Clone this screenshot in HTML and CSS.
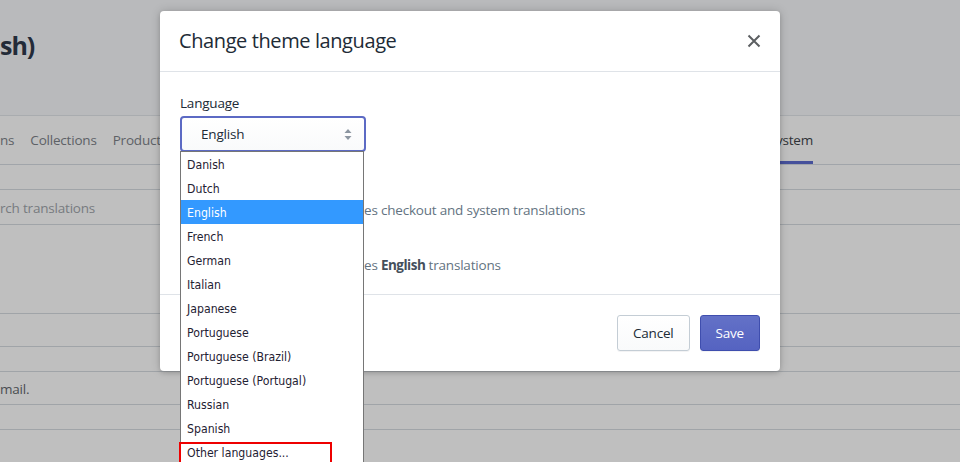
FILE: index.html
```html
<!DOCTYPE html>
<html lang="en">
<head>
<meta charset="utf-8">
<title>Change theme language</title>
<link rel="stylesheet" href="styles.css">
</head>
<body>
<div class="page">
  <header class="page-head"><h1 class="page-title">sh)</h1></header>
  <nav class="tabs">
    <span class="tab">ns</span>
    <span class="tab">Collections</span>
    <span class="tab">Products</span>
    <span class="tab-spacer"></span>
    <span class="tab active">System</span>
  </nav>
  <div class="row h24"></div>
  <div class="row search">rch translations</div>
  <div class="row h88"></div>
  <div class="row h32"></div>
  <div class="row h24"></div>
  <div class="row h32 note">mail.</div>
  <div class="row h24"></div>
</div>

<div class="modal">
  <div class="modal-head">
    <h2 class="modal-title">Change theme language</h2>
    <svg class="close" width="14" height="14" viewBox="0 0 14 14"><path d="M1.5 1.5l11 11M12.5 1.5l-11 11" stroke="#5c5f62" stroke-width="2" fill="none"/></svg>
  </div>
  <div class="modal-body">
    <div class="label">Language</div>
    <div class="select">
      <span class="select-value">English</span>
      <svg class="arrows" width="8" height="11" viewBox="0 0 8 11"><path d="M4 0L7.5 4H0.5z M4 11L7.5 7H0.5z" fill="#8c96a1"/></svg>
    </div>
    <p class="opt first"><span class="opt-lead"></span>es checkout and system translations</p>
    <p class="opt"><span class="opt-lead"></span>es <b>English</b> translations</p>
  </div>
  <div class="modal-foot">
    <button class="btn">Cancel</button>
    <button class="btn primary">Save</button>
  </div>

  <ul class="listbox">
    <li>Danish</li>
    <li>Dutch</li>
    <li class="sel">English</li>
    <li>French</li>
    <li>German</li>
    <li>Italian</li>
    <li>Japanese</li>
    <li>Portuguese</li>
    <li>Portuguese (Brazil)</li>
    <li>Portuguese (Portugal)</li>
    <li>Russian</li>
    <li>Spanish</li>
    <li>Other languages...</li>
  </ul>
  <div class="highlight-box"></div>
</div>
</body>
</html>
```

FILE: styles.css
```css
* { box-sizing: border-box; }
html, body { margin: 0; padding: 0; }
body {
  width: 960px;
  height: 462px;
  overflow: hidden;
  background: #bfbfbf;
  font-family: "Open Sans", "Noto Sans", sans-serif;
  font-size: 13.5px;
  letter-spacing: -0.2px;
  position: relative;
}
.page { width: 960px; }
.page-head {
  height: 116px;
  background: #b9babc;
  border-bottom: 1px solid #a9acaf;
  padding-top: 28px;
}
.page-title {
  margin: 0;
  font-size: 25px;
  line-height: 34px;
  font-weight: 700;
  color: #232b38;
  letter-spacing: -1px;
}
.tabs {
  display: flex;
  height: 49px;
  border-bottom: 1px solid #a1a5aa;
  color: #5d6166;
}
.tab {
  display: flex;
  align-items: center;
  margin-right: 16px;
  border-bottom: 3px solid transparent;
  padding-top: 2px;
}
.tab-spacer { flex: 1; }
.tab.active {
  margin-right: 147px;
  color: #2f3236;
  border-bottom-color: #45509b;
  padding-left: 40px;
}
.row { border-bottom: 1px solid #a0a4a8; }
.h24 { height: 25px; }
.h32 { height: 33px; }
.h88 { height: 89px; }
.search {
  height: 35px;
  display: flex;
  align-items: center;
  color: #777b80;
  padding-top: 2px;
}
.note {
  display: flex;
  align-items: center;
  color: #4a4d51;
  padding-top: 2px;
}

.modal {
  position: absolute;
  left: 160px;
  top: 11px;
  width: 620px;
  height: 360px;
  background: #fff;
  border-radius: 4px;
  box-shadow: 0 0 10px rgba(0,0,0,0.18), 0 2px 4px rgba(0,0,0,0.12);
}
.modal-head {
  height: 61px;
  display: flex;
  align-items: center;
  justify-content: space-between;
  padding: 0 19px 0 19px;
  border-bottom: 1px solid #dfe3e8;
}
.modal-title {
  margin: 0;
  font-size: 20px;
  font-weight: 400;
  color: #212b36;
  line-height: 28px;
  letter-spacing: -0.4px;
}
.modal-body {
  padding: 21px 20px 0 20px;
  height: 223px;
  border-bottom: 1px solid #dfe3e8;
}
.label {
  line-height: 20px;
  color: #212b36;
  margin-bottom: 3px;
}
.select {
  width: 186px;
  height: 36px;
  border: 2px solid #5c6ac4;
  border-radius: 4px;
  background: linear-gradient(#ffffff, #f9fafb);
  display: flex;
  align-items: center;
  justify-content: space-between;
  padding: 0 12px 0 19px;
  color: #212b36;
}
.arrows { margin-top: 1px; }
.opt {
  margin: 35px 0 0 0;
  line-height: 20px;
  color: #637381;
  white-space: nowrap;
}
.opt.first { margin-top: 48px; }
.opt b { color: #454f5b; font-weight: 700; letter-spacing: -0.5px; }
.opt-lead { display: inline-block; width: 184px; }
.modal-foot {
  display: flex;
  justify-content: flex-end;
  gap: 10px;
  padding: 20px 20px;
}
.btn {
  height: 36px;
  padding: 0 15px;
  font-family: inherit;
  font-size: 13.5px;
  letter-spacing: -0.2px;
  border-radius: 3px;
  border: 1px solid #c4cdd5;
  background: linear-gradient(#ffffff, #f9fafb);
  color: #212b36;
  box-shadow: 0 1px 0 rgba(22,29,37,0.05);
}
.btn.primary {
  background: linear-gradient(#6371c7, #5563c1);
  border-color: #3f4eae;
  color: #fff;
}
.listbox {
  position: absolute;
  left: 20px;
  top: 140px;
  width: 184px;
  margin: 0;
  padding: 0;
  list-style: none;
  background: #fff;
  border: 1px solid #767676;
  font-family: "DejaVu Sans Condensed", "DejaVu Sans", sans-serif;
  font-stretch: condensed;
  font-size: 12.2px;
  letter-spacing: 0;
  color: #1f2233;
}
.listbox li {
  height: 24px;
  line-height: 24px;
  padding: 1px 0 0 6px;
  white-space: nowrap;
}
.listbox li.sel { background: #3399ff; color: #fff; }
.highlight-box {
  position: absolute;
  left: 19px;
  top: 431px;
  width: 153px;
  height: 26px;
  border: 2px solid #ee0000;
}
```
